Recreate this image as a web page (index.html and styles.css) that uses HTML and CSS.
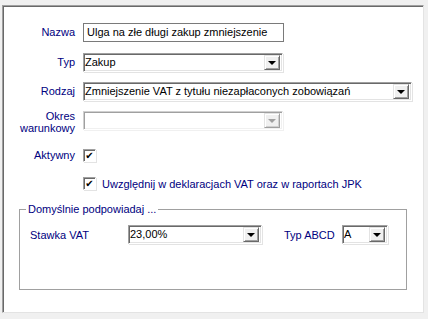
FILE: index.html
```html
<!DOCTYPE html>
<html lang="pl">
<head>
  <meta charset="UTF-8">
  <title>Rodzaj dokumentu</title>
  <link rel="stylesheet" href="styles.css">
</head>
<body>

  <div class="panel">

    <div class="row row-nazwa">
      <label class="lbl">Nazwa</label>
      <div class="edit">Ulga na złe długi zakup zmniejszenie</div>
    </div>

    <div class="row row-typ">
      <label class="lbl">Typ</label>
      <div class="combo w200"><span class="val">Zakup</span><span class="btn"><i class="arrow"></i></span></div>
    </div>

    <div class="row row-rodzaj">
      <label class="lbl">Rodzaj</label>
      <div class="combo w329"><span class="val">Zmniejszenie VAT z tytułu niezapłaconych zobowiązań</span><span class="btn"><i class="arrow"></i></span></div>
    </div>

    <div class="row row-okres">
      <label class="lbl two">Okres<br>warunkowy</label>
      <div class="combo w200 disabled"><span class="val"></span><span class="btn"><i class="arrow"></i></span></div>
    </div>

    <div class="row row-aktywny">
      <label class="lbl">Aktywny</label>
      <span class="check">✔</span>
    </div>

    <div class="row row-jpk">
      <span class="check">✔</span>
      <span class="check-text">Uwzględnij w deklaracjach VAT oraz w raportach JPK</span>
    </div>

    <fieldset class="group">
      <legend>Domyślnie podpowiadaj ...</legend>
      <div class="group-row">
        <label class="glbl vat">Stawka VAT</label>
        <div class="combo w134"><span class="val">23,00%</span><span class="btn"><i class="arrow"></i></span></div>
        <label class="glbl abcd">Typ ABCD</label>
        <div class="combo w46"><span class="val">A</span><span class="btn"><i class="arrow"></i></span></div>
      </div>
    </fieldset>

  </div>

</body>
</html>
```

FILE: styles.css
```css
body {
  margin: 0;
  padding: 5px 4px 6px 2px;
  background-color: #f0f0f0;
  font-family: "Liberation Sans", Arial, sans-serif;
  font-size: 11px;
  color: #000;
}

.panel {
  box-sizing: border-box;
  height: 308px;
  background-color: #fff;
  border-top: 1px solid #a0a0a0;
  border-left: 1px solid #a0a0a0;
  border-right: 1px solid #e3e3e3;
  border-bottom: 1px solid #e3e3e3;
  box-shadow: inset 1px 1px 0 #696969;
  padding-top: 17px;
  padding-left: 1px;
}

.row {
  display: flex;
  align-items: center;
  height: 19px;
}

.row-nazwa { margin-bottom: 11px; }
.row-typ { margin-bottom: 10px; }
.row-rodzaj { margin-bottom: 10px; }
.row-okres { margin-bottom: 19px; align-items: flex-start; }
.row-aktywny { height: 13px; margin-bottom: 15px; }
.row-jpk { height: 13px; padding-left: 79px; margin-bottom: 13px; }

.lbl {
  width: 71px;
  margin-right: 8px;
  text-align: right;
  color: #000080;
  line-height: 13px;
}

.lbl.two {
  margin-top: -1px;
  line-height: 12px;
}

.edit {
  box-sizing: border-box;
  width: 201px;
  height: 19px;
  border: 1px solid #7a7a7a;
  padding: 0 3px;
  line-height: 17px;
  white-space: nowrap;
}

.combo {
  box-sizing: border-box;
  display: flex;
  height: 19px;
  background-color: #fff;
  border-top: 1px solid #a0a0a0;
  border-left: 1px solid #a0a0a0;
  border-right: 1px solid #fff;
  border-bottom: 1px solid #fff;
  box-shadow: inset 1px 1px 0 #696969, inset -1px -1px 0 #e3e3e3, 1px 1px 0 #e3e3e3;
  padding: 1px;
}

.w200 { width: 200px; }
.w329 { width: 329px; }
.w134 { width: 134px; }
.w46 { width: 46px; }

.val {
  flex: 1;
  padding-left: 0;
  line-height: 15px;
  white-space: nowrap;
  overflow: hidden;
}

.btn {
  box-sizing: border-box;
  display: flex;
  align-items: center;
  justify-content: center;
  width: 16px;
  height: 15px;
  margin-right: 1px;
  background-color: #f0f0f0;
  border-top: 1px solid #e3e3e3;
  border-left: 1px solid #e3e3e3;
  border-right: 1px solid #696969;
  border-bottom: 1px solid #696969;
  box-shadow: inset 1px 1px 0 #fff, inset -1px -1px 0 #a0a0a0;
}

.arrow {
  width: 0;
  height: 0;
  border-left: 4px solid transparent;
  border-right: 4px solid transparent;
  border-top: 4px solid #000;
  margin-top: 1px;
}

.disabled {
  border-top-color: #d0d0d0;
  border-left-color: #d0d0d0;
  box-shadow: inset 1px 1px 0 #a0a0a0, inset -1px -1px 0 #f0f0f0, 1px 1px 0 #f0f0f0;
}

.disabled .arrow {
  border-top-color: #a0a0a0;
}

.disabled .btn {
  border-right-color: #a0a0a0;
  border-bottom-color: #a0a0a0;
  box-shadow: inset 1px 1px 0 #fff, inset -1px -1px 0 #d0d0d0;
}

.check {
  box-sizing: border-box;
  display: inline-flex;
  align-items: center;
  justify-content: center;
  width: 13px;
  height: 13px;
  background-color: #fff;
  border-top: 1px solid #a0a0a0;
  border-left: 1px solid #a0a0a0;
  border-right: 1px solid #fff;
  border-bottom: 1px solid #fff;
  box-shadow: inset 1px 1px 0 #696969, 1px 1px 0 #e3e3e3;
  font-family: "DejaVu Sans", sans-serif;
  font-size: 10px;
  line-height: 1;
  color: #000;
}

.check-text {
  margin-left: 6px;
  color: #000080;
  white-space: nowrap;
}

.group {
  box-sizing: border-box;
  width: 388px;
  height: 87px;
  margin: 0 0 0 15px;
  padding: 0;
  border: 1px solid #a0a0a0;
  box-shadow: 1px 1px 0 #fff;
}

.group legend {
  margin-left: 6px;
  padding: 0 2px;
  line-height: 13px;
  color: #000080;
}

.group-row {
  display: flex;
  align-items: center;
  margin-top: 9px;
  padding-left: 10px;
}

.glbl {
  color: #000080;
  white-space: nowrap;
}

.glbl.vat { width: 98px; }
.glbl.abcd { width: 58px; margin-left: 22px; }
```
